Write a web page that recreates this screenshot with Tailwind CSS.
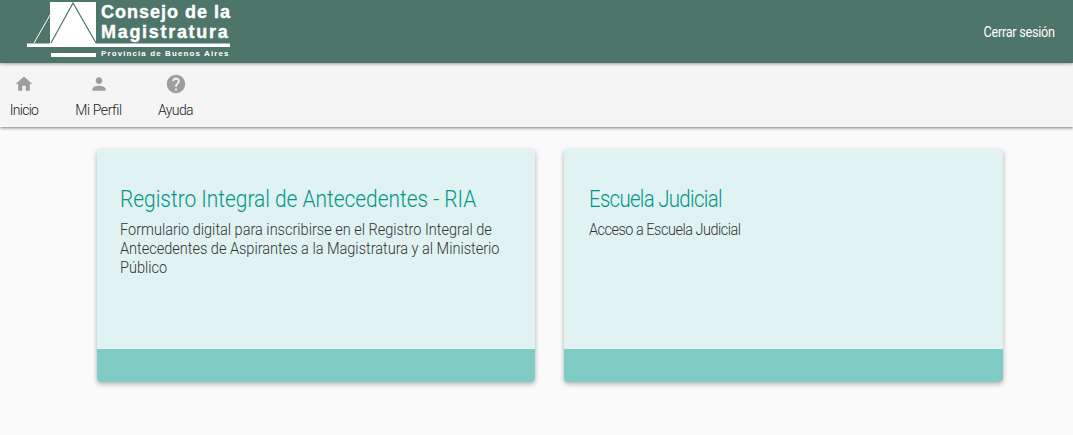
<!doctype html>
<html lang="es">
<head>
<meta charset="utf-8">
<title>Consejo de la Magistratura</title>
<script src="https://cdn.jsdelivr.net/npm/@tailwindcss/browser@4"></script>
</head>
<body class="bg-[#fafafa] font-['Roboto',sans-serif] h-[435px] overflow-hidden">
<header class="h-[63px] bg-[#4e7569] flex items-start justify-between shadow-[0_1px_3px_rgba(0,0,0,0.35)] relative z-20">
  <div class="relative w-[240px] h-[63px]">
    <svg class="absolute left-0 top-0" width="240" height="63" viewBox="0 0 240 63" fill="none">
      <rect x="50" y="2" width="46" height="42" fill="#fff"/>
      <path d="M51 43 L73 3 L96 43" stroke="#4e7569" stroke-width="1.2"/>
      <path d="M34 43 L50 15" stroke="#fff" stroke-width="1"/>
      <rect x="27" y="43.5" width="203" height="3.5" fill="#fff"/>
      <rect x="51" y="53" width="45" height="4" fill="#fff"/>
    </svg>
    <div class="absolute left-[101px] top-[2px] text-white font-['Liberation_Sans',sans-serif] font-bold text-[18px] leading-[20px] tracking-[1px] whitespace-nowrap [-webkit-text-stroke:0.4px_white]">Consejo de la</div>
    <div class="absolute left-[101px] top-[22px] text-white font-['Liberation_Sans',sans-serif] font-bold text-[18px] leading-[20px] tracking-[1.7px] whitespace-nowrap [-webkit-text-stroke:0.4px_white]">Magistratura</div>
    <div class="absolute left-[101px] top-[49px] text-white font-['Liberation_Sans',sans-serif] font-bold text-[8px] leading-[10px] tracking-[1.1px] whitespace-nowrap">Provincia de Buenos Aires</div>
  </div>
  <a class="mt-[22px] mr-[18px] text-white font-normal text-[14px] leading-[20px] tracking-[-0.3px] scale-x-[0.905] origin-right whitespace-nowrap">Cerrar sesión</a>
</header>
<nav class="h-[64px] bg-[#f5f5f5] flex items-start shadow-[0_1px_3px_rgba(0,0,0,0.5)] relative z-10 text-[#212121] font-light text-[14px] leading-[20px]">
  <a class="flex flex-col items-center w-[28px] ml-[10px] pt-[11px]">
    <svg class="w-[20px] h-[20px]" viewBox="0 0 24 24" fill="#9e9e9e"><path d="M10 20v-6h4v6h5v-8h3L12 3 2 12h3v8z"/></svg>
    <span class="mt-[6px] whitespace-nowrap tracking-[-0.75px]">Inicio</span>
  </a>
  <a class="flex flex-col items-center w-[47px] ml-[37px] pt-[11px]">
    <svg class="w-[20px] h-[20px]" viewBox="0 0 24 24" fill="#9e9e9e"><path d="M12 12c2.21 0 4-1.79 4-4s-1.79-4-4-4-4 1.79-4 4 1.79 4 4 4zm0 2c-2.67 0-8 1.34-8 4v2h16v-2c0-2.66-5.33-4-8-4z"/></svg>
    <span class="mt-[6px] whitespace-nowrap tracking-[-0.4px]">Mi Perfil</span>
  </a>
  <a class="flex flex-col items-center w-[35px] ml-[36px] pt-[10px]">
    <svg class="w-[22px] h-[22px]" viewBox="0 0 24 24" fill="#9e9e9e"><path d="M12 2C6.48 2 2 6.48 2 12s4.48 10 10 10 10-4.48 10-10S17.52 2 12 2zm1 17h-2v-2h2v2zm2.07-7.75l-.9.92C13.45 12.9 13 13.5 13 15h-2v-.5c0-1.1.45-2.1 1.17-2.83l1.24-1.26c.37-.36.59-.86.59-1.41 0-1.1-.9-2-2-2s-2 .9-2 2H8c0-2.21 1.79-4 4-4s4 1.79 4 4c0 .88-.36 1.68-.93 2.25z"/></svg>
    <span class="mt-[5px] whitespace-nowrap tracking-[-0.65px]">Ayuda</span>
  </a>
</nav>
<main class="flex gap-[29px] pl-[97px] pt-[22px]">
  <article class="w-[438px] h-[233px] rounded-[4px] overflow-hidden bg-[#e0f2f1] flex flex-col shadow-[0_2px_5px_rgba(0,0,0,0.3)]">
    <div class="flex-1 pl-[23px] pr-[20px] pt-[35px]">
      <h2 class="text-[#009688] font-light text-[24px] leading-[30px] scale-x-[0.87] origin-left whitespace-nowrap">Registro Integral de Antecedentes - RIA</h2>
      <p class="mt-[6px] text-[#333] font-light text-[16px] leading-[19px] scale-x-[0.907] origin-left whitespace-nowrap">Formulario digital para inscribirse en el Registro Integral de<br>Antecedentes de Aspirantes a la Magistratura y al Ministerio<br>Público</p>
    </div>
    <div class="h-[33px] bg-[#80cbc4]"></div>
  </article>
  <article class="w-[439px] h-[233px] rounded-[4px] overflow-hidden bg-[#e0f2f1] flex flex-col shadow-[0_2px_5px_rgba(0,0,0,0.3)]">
    <div class="flex-1 pl-[25px] pr-[20px] pt-[35px]">
      <h2 class="text-[#009688] font-light text-[24px] leading-[30px] tracking-[-0.8px] scale-x-[0.85] origin-left whitespace-nowrap">Escuela Judicial</h2>
      <p class="mt-[6px] text-[#333] font-light text-[16px] leading-[19px] tracking-[-0.5px] scale-x-[0.9] origin-left whitespace-nowrap">Acceso a Escuela Judicial</p>
    </div>
    <div class="h-[33px] bg-[#80cbc4]"></div>
  </article>
</main>
</body>
</html>
